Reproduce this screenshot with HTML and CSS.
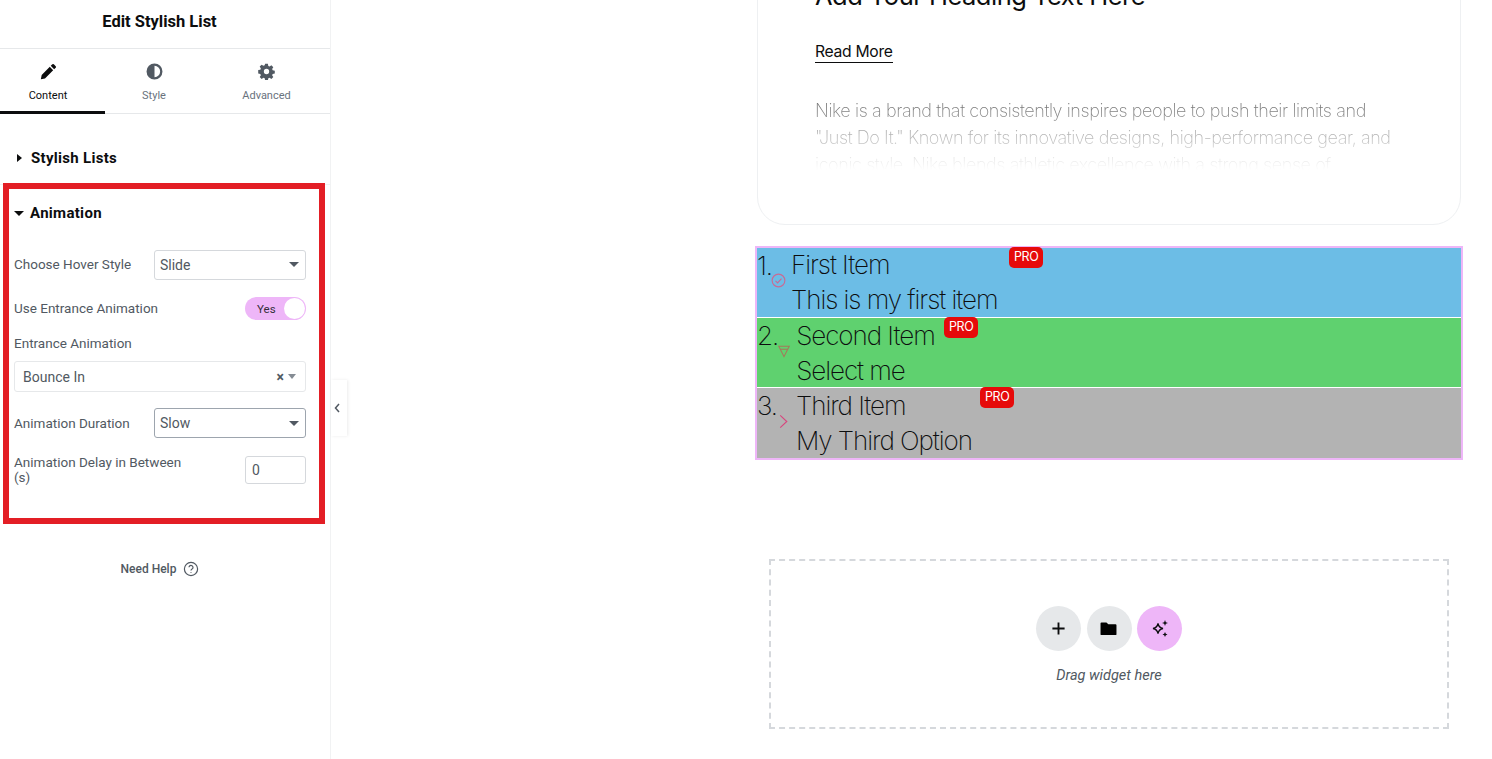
FILE: index.html
```html
<!DOCTYPE html>
<html lang="en">
<head>
    <meta charset="UTF-8">
    <meta name="viewport" content="width=device-width, initial-scale=1.0">
    <title>Edit Stylish List</title>
    <link rel="stylesheet" href="styles.css">
</head>
<body>
    <!-- Panel -->
    <aside class="panel">
        <header class="panel-title">Edit Stylish List</header>
        <nav class="tabs">
            <div class="tab active">
                <svg class="tab-icon" viewBox="0 0 16 16"><path d="M11.6 1.2a1 1 0 0 1 1.4 0l1.8 1.8a1 1 0 0 1 0 1.4l-1.500 1.500-3.200-3.200zM9.200 3.600l3.200 3.200-7.700 7.700-3.900.9.800-4z"/></svg>
                <span>Content</span>
            </div>
            <div class="tab">
                <svg class="tab-icon" viewBox="0 0 16 16"><path fill-rule="evenodd" d="M8 .5a7.5 7.5 0 1 1 0 15 7.5 7.5 0 0 1 0-15zm0 2.200v10.600a5.300 5.300 0 0 0 0-10.600z"/></svg>
                <span>Style</span>
            </div>
            <div class="tab">
                <svg class="tab-icon" viewBox="0 0 16 16"><path fill-rule="evenodd" d="M6.700.8h2.600l.4 2 1.200.5 1.700-1.100 1.800 1.800-1.100 1.700.5 1.200 2 .4v2.600l-2 .4-.5 1.200 1.100 1.700-1.800 1.800-1.700-1.100-1.200.5-.4 2H6.700l-.4-2-1.200-.5-1.700 1.100-1.800-1.800 1.100-1.700-.5-1.200-2-.4V6.700l2-.4.5-1.200-1.100-1.700 1.800-1.800 1.700 1.100 1.200-.5zM8 5.500a2.500 2.500 0 1 0 0 5 2.500 2.500 0 0 0 0-5z"/></svg>
                <span>Advanced</span>
            </div>
        </nav>

        <section class="section section-closed">
            <span class="caret-right"></span>
            <h2>Stylish Lists</h2>
        </section>

        <section class="section-open">
            <div class="section-head">
                <span class="caret-down"></span>
                <h2>Animation</h2>
            </div>

            <div class="field field-hover">
                <label>Choose Hover Style</label>
                <div class="select">Slide<span class="caret-down dark"></span></div>
            </div>
            <div class="field field-toggle">
                <label>Use Entrance Animation</label>
                <div class="toggle"><span>Yes</span><i></i></div>
            </div>
            <div class="field-stack">
                <label>Entrance Animation</label>
                <div class="select2">Bounce In<span class="clear">×</span><span class="caret-down grey"></span></div>
            </div>
            <div class="field field-duration">
                <label>Animation Duration</label>
                <div class="select focus">Slow<span class="caret-down dark"></span></div>
            </div>
            <div class="field field-delay">
                <label>Animation Delay in Between (s)</label>
                <div class="number">0</div>
            </div>
        </section>

        <div class="help">
            Need Help
            <svg class="help-icon" viewBox="0 0 16 16"><circle cx="8" cy="8" r="6.600"/><path d="M6 6.300a2 2 0 1 1 3 1.800c-.7.400-1 .8-1 1.500"/><path d="M8 11.200v.8"/></svg>
        </div>

        <!-- Red annotation + collapse handle lie over the panel -->
        <div class="annotation"></div>
        <div class="collapse">
            <svg viewBox="0 0 8 12"><path d="M6 2 2.500 6 6 10"/></svg>
        </div>
    </aside>

    <!-- Canvas -->
    <main class="canvas">
        <article class="card">
            <h1>Add Your Heading Text Here</h1>
            <a class="read-more">Read More</a>
            <p>Nike is a brand that consistently inspires people to push their limits and "Just Do It." Known for its innovative designs, high-performance gear, and iconic style, Nike blends athletic excellence with a strong sense of</p>
        </article>

        <ol class="stylish-list">
            <li class="item item-blue">
                <span class="num">1.</span>
                <svg class="item-icon" viewBox="0 0 16 16"><circle cx="8" cy="8" r="6.800"/><path d="M4.800 8.300l2.200 2.200 4.200-4.600"/></svg>
                <div class="item-text"><div>First Item</div><div>This is my first item</div></div>
                <span class="pro pro-1">PRO</span>
            </li>
            <li class="item item-green">
                <span class="num">2.</span>
                <svg class="item-icon icon-funnel" viewBox="0 0 16 16"><path d="M2 2.500h12L8 14.500z"/><path d="M3.500 6h9"/></svg>
                <div class="item-text"><div>Second Item</div><div>Select me</div></div>
                <span class="pro pro-2">PRO</span>
            </li>
            <li class="item item-grey">
                <span class="num">3.</span>
                <svg class="item-icon icon-arrow" viewBox="0 0 16 16"><path d="M4.500 1.500 11.500 8l-7 6.500"/></svg>
                <div class="item-text"><div>Third Item</div><div>My Third Option</div></div>
                <span class="pro pro-3">PRO</span>
            </li>
        </ol>

        <div class="dropzone">
            <div class="drop-buttons">
                <span class="round">
                    <svg viewBox="0 0 16 16" class="plus"><path d="M8 1.500v13M1.500 8h13"/></svg>
                </span>
                <span class="round">
                    <svg viewBox="0 0 18 16" class="folder"><path d="M1.500 1.500h5.300l2 2h7.700a1 1 0 0 1 1 1v9.500a1 1 0 0 1-1 1h-15a1 1 0 0 1-1-1v-11.500a1 1 0 0 1 1-1z"/></svg>
                </span>
                <span class="round round-pink">
                    <svg viewBox="0 0 20 20" class="sparks"><path class="spark-line" d="M8 4.500c.6 3 1.800 4.400 5 5-3.200.6-4.400 2-5 5-.6-3-1.800-4.400-5-5 3.200-.6 4.400-2 5-5z"/><path d="M15 1l.8 2.200 2.200.8-2.200.8-.8 2.200-.8-2.200-2.200-.8 2.200-.8zM15 13l.8 1.700 1.700.8-1.700.8-.8 1.700-.8-1.700-1.700-.8 1.700-.8z"/></svg>
                </span>
            </div>
            <div class="drop-text">Drag widget here</div>
        </div>
    </main>
</body>
</html>
```

FILE: styles.css
```css
* {
    margin: 0;
    padding: 0;
    box-sizing: border-box;
}

body {
    display: flex;
    height: 759px;
    overflow: hidden;
    background: #fff;
    font-family: Roboto, "Liberation Sans", sans-serif;
    color: #515962;
}

/* Panel */
.panel {
    position: relative;
    width: 331px;
    flex-shrink: 0;
    border-right: 1px solid #f1f2f3;
}

.panel-title {
    height: 49px;
    padding: 12px 11px 0 0;
    border-bottom: 1px solid #e6e8ea;
    text-align: center;
    font-size: 16.500px;
    line-height: 19px;
    font-weight: 700;
    color: #0c0d0e;
}

.tabs {
    display: grid;
    grid-template-columns: 105px 98px 1fr;
    height: 65px;
    border-bottom: 1px solid #e6e8ea;
}

.tab {
    display: flex;
    flex-direction: column;
    align-items: center;
    padding-top: 14px;
    font-size: 11px;
    line-height: 13px;
    color: #69727d;
}

.tab.active {
    margin-bottom: -1px;
    padding-right: 9px;
    border-bottom: 3px solid #0c0d0e;
    color: #0c0d0e;
}

.tab-icon {
    width: 17px;
    height: 17px;
    margin-bottom: 9px;
    fill: #515962;
}

.tab.active .tab-icon {
    fill: #0c0d0e;
}

.section {
    display: flex;
    align-items: center;
    gap: 9px;
}

.section-closed {
    height: 71px;
    padding: 17px 0 0 17px;
    border-bottom: 1px solid #f1f2f3;
}

h2 {
    font-size: 15px;
    line-height: 18px;
    font-weight: 700;
    color: #0c0d0e;
    letter-spacing: .3px;
}

.caret-right {
    border-left: 5px solid #0c0d0e;
    border-top: 4px solid transparent;
    border-bottom: 4px solid transparent;
}

.caret-down {
    border-top: 5px solid #0c0d0e;
    border-left: 5px solid transparent;
    border-right: 5px solid transparent;
}

.caret-down.dark {
    margin-left: auto;
    border-top-color: #515962;
}

.caret-down.grey {
    border-top-color: #858c94;
    border-left-width: 4px;
    border-right-width: 4px;
}

.section-open {
    padding: 0 24px 0 14px;
}

.section-head {
    display: flex;
    align-items: center;
    gap: 6px;
    padding-top: 19px;
    margin-bottom: 28px;
}

.field {
    display: flex;
    align-items: center;
    justify-content: space-between;
}

label {
    font-size: 13.500px;
    line-height: 15px;
    color: #515962;
}

.field-hover label {
    margin-bottom: 2px;
}

.select {
    display: flex;
    align-items: center;
    width: 152px;
    height: 30px;
    padding: 0 6px 0 5px;
    border: 1px solid #d5d8dc;
    border-radius: 3px;
    font-size: 14px;
    color: #515962;
}

.field-hover .select {
    padding-bottom: 1px;
}

.select.focus {
    border-color: #9da5ae;
}

.field-toggle {
    margin-top: 17px;
}

.toggle {
    display: flex;
    align-items: center;
    justify-content: space-between;
    width: 61px;
    height: 23px;
    padding: 0 1px 0 12px;
    border-radius: 12px;
    background: #eeb6f8;
    font-size: 11.500px;
    color: #33303a;
}

.toggle i {
    width: 21px;
    height: 21px;
    border-radius: 50%;
    background: #fff;
}

.field-stack {
    margin-top: 16px;
}

.field-stack label {
    display: block;
    margin-bottom: 10px;
}

.select2 {
    display: flex;
    align-items: center;
    height: 31px;
    padding: 0 9px 0 8px;
    border: 1px solid #e6e8ea;
    border-radius: 3px;
    font-size: 14px;
    color: #515962;
}

.clear {
    margin: 0 4px 0 auto;
    font-size: 14px;
    font-weight: 700;
}

.field-duration {
    margin-top: 16px;
}

.field-delay {
    margin-top: 17px;
}

.field-delay label {
    width: 175px;
}

.number {
    width: 61px;
    height: 28px;
    padding: 0 6px;
    border: 1px solid #d5d8dc;
    border-radius: 3px;
    font-size: 14px;
    line-height: 26px;
}

.help {
    display: flex;
    align-items: center;
    justify-content: center;
    gap: 7px;
    margin-top: 76px;
    padding-right: 10px;
    font-size: 12px;
    font-weight: 500;
    line-height: 16px;
}

.help-icon {
    width: 16px;
    height: 16px;
    fill: none;
    stroke: #515962;
    stroke-width: 1.200;
}

.annotation {
    position: absolute;
    left: 3px;
    top: 183px;
    width: 322px;
    height: 341px;
    border: 6px solid #e31e25;
}

.collapse {
    position: absolute;
    left: 331px;
    top: 380px;
    display: flex;
    align-items: center;
    justify-content: center;
    width: 16px;
    height: 56px;
    padding-right: 4px;
    background: #fff;
    box-shadow: 1px 0 3px rgba(0, 0, 0, .08);
}

.collapse svg {
    width: 8px;
    height: 12px;
    fill: none;
    stroke: #515962;
    stroke-width: 1.500;
}

/* Canvas */
.canvas {
    width: 708px;
    margin-left: 424px;
    font-family: Inter, "Noto Sans", sans-serif;
    color: #0c0d0e;
}

.card {
    height: 272px;
    margin: -47px 2px 0;
    padding: 27px 57px 0 57px;
    border: 1px solid #eef0f2;
    border-radius: 28px;
}

.card h1 {
    font-size: 25.500px;
    line-height: 30px;
    font-weight: 400;
    letter-spacing: -.5px;
    white-space: nowrap;
}

.read-more {
    display: inline-block;
    margin-top: 30px;
    border-bottom: 1px solid #0c0d0e;
    font-size: 15.700px;
    line-height: 21px;
    font-weight: 400;
    letter-spacing: -.3px;
}

.card p {
    height: 81px;
    margin-top: 34px;
    overflow: hidden;
    font-size: 18px;
    line-height: 27px;
    font-weight: 200;
    letter-spacing: -.4px;
    color: #777;
    -webkit-mask-image: linear-gradient(to bottom, #000 10%, transparent 90%);
    mask-image: linear-gradient(to bottom, #000 10%, transparent 90%);
}

.stylish-list {
    margin-top: 21px;
    border: 2px solid #eeb6f8;
    list-style: none;
}

.item {
    position: relative;
    display: flex;
    height: 70px;
    font-size: 26px;
    font-weight: 200;
    letter-spacing: -1.050px;
    border-bottom: 1px solid #fff;
}

.item:last-child {
    border-bottom: none;
}

.item-blue {
    background: #6cbde6;
}

.item-blue .item-text {
    margin-top: -1px;
}

.item-green {
    background: #5fd16f;
}

.item-grey {
    background: #b3b3b3;
}

.num {
    line-height: 35px;
}

.item-text {
    margin-left: 5px;
    line-height: 35px;
}

.item-icon {
    width: 15px;
    height: 15px;
    margin: 25px 0 0 -1px;
    fill: none;
    stroke: #c96a94;
    stroke-width: 1.200;
}

.icon-funnel {
    stroke: #a5785a;
    width: 14px;
    height: 14px;
    margin-top: 26px;
}

.icon-arrow {
    stroke: #d8457d;
    margin-top: 26px;
}

.pro {
    position: absolute;
    top: -1px;
    height: 21px;
    padding: 0 5px;
    border-radius: 5px;
    background: #e60a0a;
    color: #fff;
    font-size: 12.500px;
    line-height: 19px;
    font-weight: 400;
    letter-spacing: -.4px;
}

.pro-1 {
    left: 252px;
}

.pro-2 {
    left: 187px;
}

.pro-3 {
    left: 223px;
}

.dropzone {
    display: flex;
    flex-direction: column;
    align-items: center;
    height: 170px;
    margin: 99px 14px 0;
    padding-top: 45px;
    border: 2px dashed #d5d8dc;
}

.drop-buttons {
    display: flex;
    gap: 6px;
}

.round {
    display: flex;
    align-items: center;
    justify-content: center;
    width: 45px;
    height: 45px;
    border-radius: 50%;
    background: #e6e8ea;
}

.round:last-child {
    margin-left: -1px;
}

.round-pink {
    background: #eeb6f8;
}

.plus {
    width: 15px;
    height: 15px;
    margin-right: 1px;
    fill: none;
    stroke: #0c0d0e;
    stroke-width: 2;
}

.folder {
    width: 17px;
    height: 15px;
    margin-right: 2px;
    fill: #000;
}

.sparks {
    width: 20px;
    height: 20px;
    fill: #0c0d0e;
}

.spark-line {
    fill: none;
    stroke: #0c0d0e;
    stroke-width: 1.300;
}

.drop-text {
    margin-top: 16px;
    font-family: Roboto, "Liberation Sans", sans-serif;
    font-size: 14.500px;
    font-style: italic;
    line-height: 17px;
    color: #515962;
}
```
